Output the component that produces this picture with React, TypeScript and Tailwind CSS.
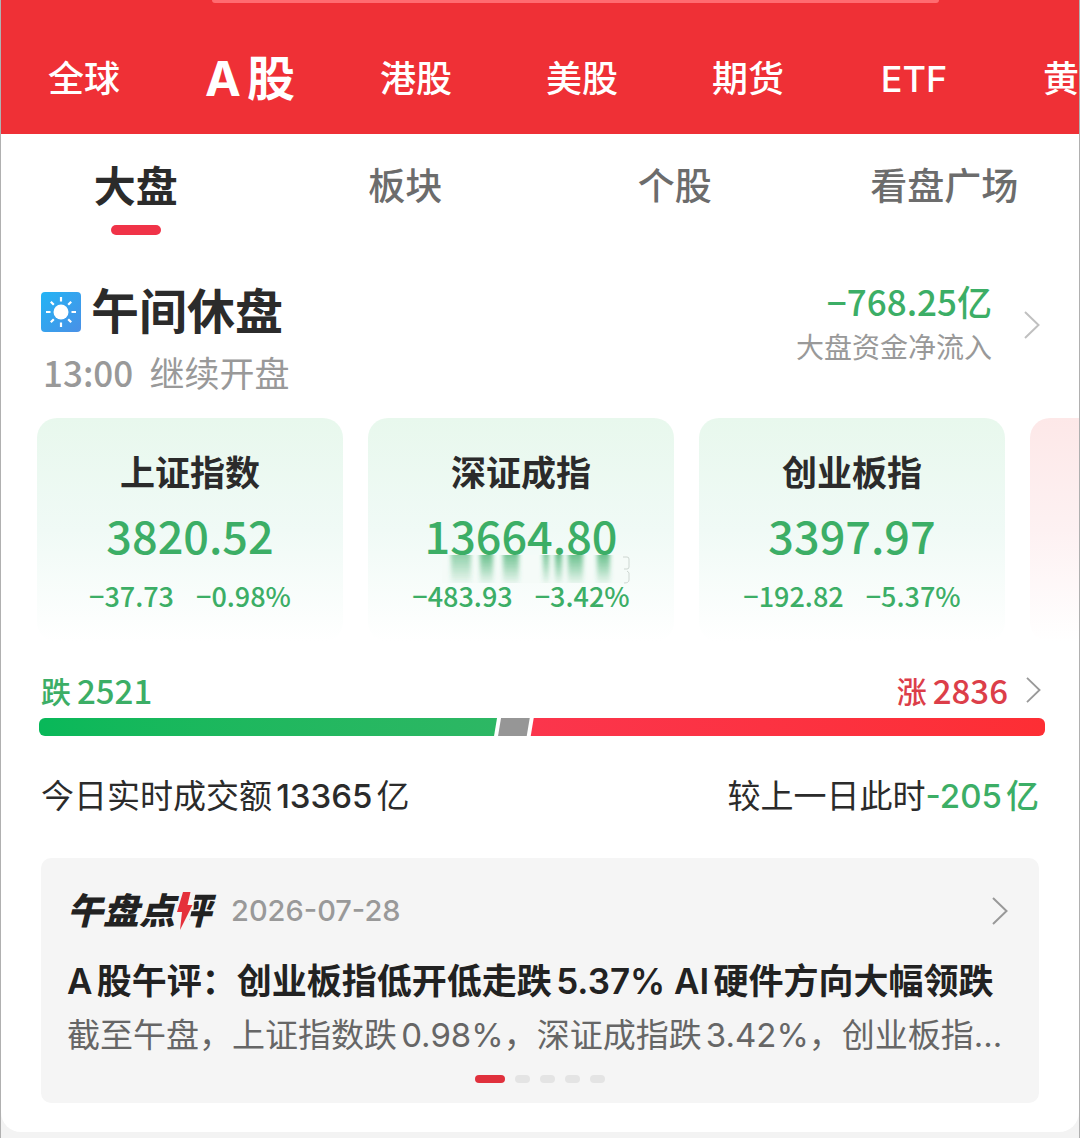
const markets = ["全球", "A股", "港股", "美股", "期货", "ETF", "黄"];

const sections = ["大盘", "板块", "个股", "看盘广场"];

const indices = [
  { name: "上证指数", value: "3820.52", change: "−37.73", percent: "−0.98%" },
  { name: "深证成指", value: "13664.80", change: "−483.93", percent: "−3.42%" },
  { name: "创业板指", value: "3397.97", change: "−192.82", percent: "−5.37%" },
];

const breadth = { down: 2521, flat: 180, up: 2836 };

// x, width and opacity of each streak under the middle card's value
const streaks = [
  [9, 20, 0.55],
  [38, 13, 0.75],
  [61, 16, 0.7],
  [101, 6, 0.7],
  [113, 7, 0.8],
  [126, 15, 0.75],
  [155, 13, 0.75],
];

function Chevron({ className }: { className: string }) {
  return (
    <svg viewBox="0 0 16 28" fill="none" stroke="currentColor" strokeWidth="2" className={className} aria-hidden="true">
      <path d="M1 1L14.500 14L1 27" />
    </svg>
  );
}

function SunIcon() {
  return (
    <svg viewBox="0 0 40 40" className="size-10 shrink-0" aria-hidden="true">
      <defs>
        <linearGradient id="sky" x1="0" y1="0" x2="1" y2="1">
          <stop offset="0" stopColor="#22b4f5" />
          <stop offset="1" stopColor="#4a90e6" />
        </linearGradient>
      </defs>
      <rect width="40" height="40" rx="4" fill="url(#sky)" />
      <circle cx="20" cy="20" r="7.500" fill="#fff" />
      <g stroke="#fff" strokeWidth="2.200">
        <path d="M20 5v4.500M20 30.500V35M5 20h4.500M30.500 20H35M9.800 9.800l3 3M27.200 27.200l3 3M9.800 30.200l3-3M27.200 12.800l3-3" />
      </g>
    </svg>
  );
}

function Smudge() {
  return (
    <svg viewBox="0 0 190 32" className="absolute top-[134px] left-[74px] h-8 w-[190px]" aria-hidden="true">
      <defs>
        <linearGradient id="fade" x1="0" y1="0" x2="0" y2="1">
          <stop offset="0" stopColor="#3fae6c" />
          <stop offset="1" stopColor="#3fae6c" stopOpacity="0.1" />
        </linearGradient>
        <filter id="soft" x="-50%" width="200%">
          <feGaussianBlur stdDeviation="2 0.5" />
        </filter>
      </defs>
      <rect x="0" y="3" width="186" height="28" fill="#f5fbf8" />
      <g filter="url(#soft)">
        {streaks.map(([x, width, opacity]) => (
          <rect key={x} x={x} y="3" width={width} height="28" fill="url(#fade)" opacity={opacity} />
        ))}
      </g>
      <path d="M181 5h4q2 0 2 2v8q0 2-2 2h-3M185 19q3 1 2 5v4q0 3-5 3" fill="none" stroke="#cdd6d1" />
    </svg>
  );
}

function MarketNav() {
  return (
    <header className="bg-[#ef3036] text-white">
      <div className="pr-[140px] pl-[211px]">
        <div className="h-[3px] rounded-b-lg bg-[#ff6b70]" />
      </div>
      <nav className="flex h-[131px] items-center overflow-hidden pt-5">
        {markets.map((market) => (
          <button
            key={market}
            className={
              market === "A股"
                ? "w-[166px] shrink-0 text-[48px] leading-[60px] font-bold whitespace-nowrap"
                : "min-w-9 shrink-0 text-[36px] leading-[60px] font-medium whitespace-nowrap not-last:w-[166px] last:ml-[46px]"
            }
          >
            {market}
          </button>
        ))}
      </nav>
    </header>
  );
}

function SectionTabs() {
  return (
    <nav className="grid h-[102px] grid-cols-4 bg-white pt-[23px]">
      {sections.map((section, i) => (
        <button key={section} className="flex flex-col items-center gap-2">
          <span
            className={
              i === 0
                ? "text-[42px] leading-[60px] font-bold text-[#2b2b2b]"
                : "text-[37px] leading-[60px] font-medium text-[#6c6c6c]"
            }
          >
            {section}
          </span>
          {i === 0 && <span className="h-[10px] w-[50px] rounded-full bg-[#f03348]" />}
        </button>
      ))}
    </nav>
  );
}

function MarketStatus() {
  return (
    <div className="flex items-start justify-between pr-[39px] pl-10">
      <div className="pt-1">
        <div className="flex items-center gap-[10px]">
          <SunIcon />
          <h1 className="text-[48px] leading-[60px] font-bold text-[#2b2b2b]">午间休盘</h1>
        </div>
        <p className="font-[Noto_Sans_CJK_SC] text-[35px] leading-[60px] text-[#999]">
          <span className="mr-3 ml-[2px] font-medium">13:00</span>
          继续开盘
        </p>
      </div>
      <a href="#flow" className="flex items-center gap-8">
        <span className="flex flex-col items-end">
          <span className="font-[Noto_Sans_CJK_SC] text-[35px] leading-[46px] font-medium text-[#3cae66] [text-autospace:no-autospace]">
            −768.25亿
          </span>
          <span className="text-[28px] leading-[48px] text-[#999]">大盘资金净流入</span>
        </span>
        <Chevron className="h-7 w-4 text-[#c0c0c0]" />
      </a>
    </div>
  );
}

function IndexCards() {
  return (
    <div className="mt-4 flex h-[224px] gap-[25px] overflow-hidden pl-9">
      {indices.map((item, i) => (
        <a
          key={item.name}
          href="#index"
          className="relative flex w-[306px] shrink-0 flex-col items-center rounded-[20px] bg-linear-to-b from-[#e8f8ed] via-[#f0faf6] to-white pt-7 font-[Noto_Sans_CJK_SC] font-medium text-[#3cae66]"
        >
          <h2 className="text-[35px] leading-[50px] font-bold text-[#2b2b2b]">{item.name}</h2>
          <p className="text-[45px] leading-[78px]">{item.value}</p>
          <p className="flex gap-[22px] text-[27px] leading-[44px]">
            <span>{item.change}</span>
            <span>{item.percent}</span>
          </p>
          {i === 1 && <Smudge />}
        </a>
      ))}
      <div className="w-[306px] shrink-0 rounded-[20px] bg-linear-to-b from-[#fde8e8] via-[#fdf1f2] to-white" />
    </div>
  );
}

function Breadth() {
  return (
    <div className="mt-6 pr-[34px] pl-[38px]">
      <div className="flex items-center justify-between font-[Noto_Sans_CJK_SC] text-[33px] leading-[48px] font-medium">
        <p className="flex items-center gap-[6px] pl-[2px] text-[#3cae66]">
          <span className="text-[30px]">跌</span>
          {breadth.down}
        </p>
        <a href="#breadth" className="flex items-center gap-[6px] pr-1 text-[#dc3e49]">
          <span className="text-[30px]">涨</span>
          {breadth.up}
          <Chevron className="ml-3 h-[26px] w-[15px] text-[#999]" />
        </a>
      </div>
      <div className="mt-1 flex h-[18px]">
        <div
          className="rounded-l-md bg-linear-to-r from-[#08b859] to-[#2db764] [clip-path:polygon(0_0,100%_0,calc(100%-3px)_100%,0_100%)]"
          style={{ flexGrow: breadth.down }}
        />
        <div
          className="bg-[#969696] [clip-path:polygon(4px_0,100%_0,calc(100%-3px)_100%,1px_100%)]"
          style={{ flexGrow: breadth.flat }}
        />
        <div
          className="rounded-r-md bg-linear-to-r from-[#fb354c] to-[#fd2e34] [clip-path:polygon(4px_0,100%_0,100%_100%,1px_100%)]"
          style={{ flexGrow: breadth.up }}
        />
      </div>
    </div>
  );
}

function ReviewCard() {
  return (
    <article className="mx-10 mt-[38px] flex flex-col rounded-[10px] bg-[#f5f5f5] px-[26px] pt-[29px] pb-5">
      <a href="#review" className="flex items-center pr-[5px]">
        <h2 className="relative text-[36px] leading-[48px] font-black text-[#222] italic">
          午盘点评
          <svg viewBox="0 0 24 42" className="absolute top-[3px] left-[107px] h-[42px] w-6" aria-hidden="true">
            <path d="M9 0H22L13 42H1z" fill="#f5f5f5" />
            <path d="M9 2h7.500L13.500 15h5L6 40l2-18H3z" fill="#e5303b" />
          </svg>
        </h2>
        <time className="ml-5 text-[29px] leading-[48px] font-medium text-[#999]">2026-07-28</time>
        <Chevron className="ml-auto h-7 w-4 text-[#999]" />
      </a>
      <h3 className="mt-[18px] overflow-hidden text-[35px] leading-[56px] font-semibold whitespace-nowrap text-[#222]">
        A股午评：创业板指低开低走跌5.37% AI硬件方向大幅领跌
      </h3>
      <p className="overflow-hidden text-[33px] leading-[52px] whitespace-nowrap text-[#666]">
        截至午盘，上证指数跌0.98%，深证成指跌3.42%，创业板指...
      </p>
      <div className="mt-[14px] flex justify-center gap-[10px]">
        <span className="h-2 w-[30px] rounded-full bg-[#e0303c]" />
        {[1, 2, 3, 4].map((dot) => (
          <span key={dot} className="h-2 w-[15px] rounded-full bg-[#e4e4e4]" />
        ))}
      </div>
    </article>
  );
}

export default function App() {
  return (
    <div className="min-h-screen overflow-hidden border-x border-[#b0b0b0] bg-[#f3f3f3] font-[Inter,Noto_Sans_CJK_SC,sans-serif] [text-autospace:normal]">
      <MarketNav />
      <SectionTabs />
      <main className="rounded-b-[20px] bg-white pt-[42px] pb-[29px]">
        <MarketStatus />
        <IndexCards />
        <Breadth />
        <div className="mt-9 flex justify-between px-10 text-[33px] leading-[48px] text-[#2b2b2b]">
          <p>
            今日实时成交额<span className="font-medium">13365</span>亿
          </p>
          <p>
            较上一日此时<span className="font-medium text-[#3cae66]">-205亿</span>
          </p>
        </div>
        <ReviewCard />
      </main>
    </div>
  );
}
